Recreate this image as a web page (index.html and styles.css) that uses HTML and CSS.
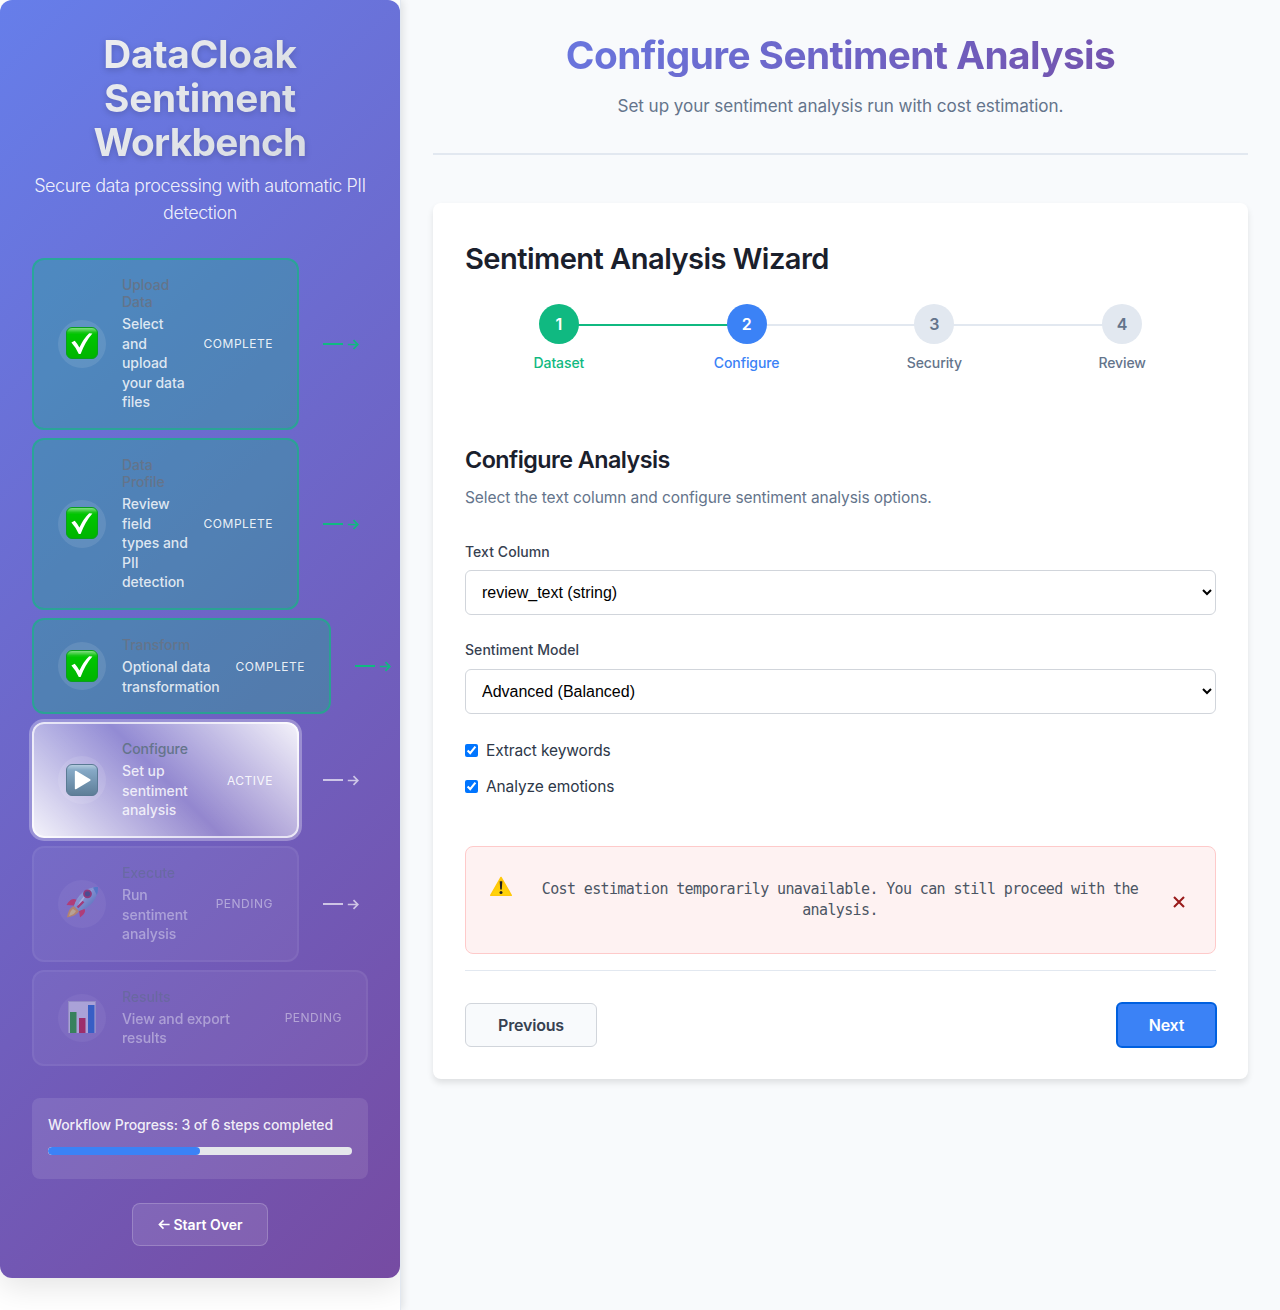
FILE: index.html
```html
<!DOCTYPE html>
<html lang="en">
<head>
<meta charset="utf-8">
<title>DataCloak Sentiment Workbench</title>
<link rel="stylesheet" href="styles.css">
</head>
<body>
<svg class="defs" aria-hidden="true">
  <defs>
    <linearGradient id="greenTile" x1="0" y1="0" x2="0" y2="1"><stop offset="0" stop-color="#8fe08f"/><stop offset=".16" stop-color="#18c618"/><stop offset=".22" stop-color="#00c600"/><stop offset="1" stop-color="#00b400"/></linearGradient>
    <linearGradient id="blueTile" x1="0" y1="0" x2="0" y2="1"><stop offset="0" stop-color="#b9d0e2"/><stop offset=".18" stop-color="#86a9c6"/><stop offset="1" stop-color="#5d7d97"/></linearGradient>
    <linearGradient id="hull" x1="0" y1="0" x2="1" y2="1"><stop offset="0" stop-color="#c5e4f8"/><stop offset=".5" stop-color="#8db9dc"/><stop offset="1" stop-color="#2469ad"/></linearGradient>
    <linearGradient id="warn" x1="0" y1="0" x2="0" y2="1"><stop offset="0" stop-color="#ffc107"/><stop offset="1" stop-color="#ffd60a"/></linearGradient>
    <symbol id="check" viewBox="0 0 32 32"><rect x=".5" y=".5" width="31" height="31" rx="5.5" fill="url(#greenTile)" stroke="#0a9f1d"/><path d="M5.400 15.600 8.700 13.800Q11.600 17 13.400 20.600 17.500 11.500 23.200 6.200L26.400 6.400Q19 14.800 14.600 27H12.800Q9.800 20.500 5.400 15.600Z" fill="#fff"/></symbol>
    <symbol id="arrow" viewBox="0 0 12 12"><path d="M.8 6.500H10.600M6.500 2.200 10.800 6.500 6.500 10.800" fill="none" stroke="currentColor" stroke-width="1.700"/></symbol>
  </defs>
</svg>
<div class="app">
  <aside class="sidebar">
    <div class="workflow">
      <header class="brand">
        <h1>DataCloak<br>Sentiment<br><span>Workbench</span></h1>
        <p>Secure data processing with automatic PII<br>detection</p>
      </header>
      <div class="steps">
        <div class="row">
          <div class="step done">
            <div class="icon"><svg width="32" height="32"><use href="#check"/></svg></div>
            <div class="info"><h3>Upload<br>Data</h3><p>Select<br>and<br>upload<br>your data<br>files</p></div>
            <span class="status">Complete</span>
          </div>
          <div class="link green"><i></i><svg width="12" height="12"><use href="#arrow"/></svg></div>
        </div>
        <div class="row">
          <div class="step done">
            <div class="icon"><svg width="32" height="32"><use href="#check"/></svg></div>
            <div class="info"><h3>Data<br>Profile</h3><p>Review<br>field<br>types and<br>PII<br>detection</p></div>
            <span class="status">Complete</span>
          </div>
          <div class="link green"><i></i><svg width="12" height="12"><use href="#arrow"/></svg></div>
        </div>
        <div class="row">
          <div class="step done wide">
            <div class="icon"><svg width="32" height="32"><use href="#check"/></svg></div>
            <div class="info"><h3>Transform</h3><p>Optional data<br>transformation</p></div>
            <span class="status">Complete</span>
          </div>
          <div class="link green"><i></i><svg width="12" height="12"><use href="#arrow"/></svg></div>
        </div>
        <div class="row">
          <div class="step active">
            <div class="icon"><svg width="32" height="32" viewBox="0 0 32 32"><rect x=".5" y=".5" width="31" height="31" rx="5.5" fill="url(#blueTile)" stroke="#5a7a94"/><path d="M9.600 7.500 23.800 16 9.600 24.500Z" fill="#fff" stroke="#fff" stroke-width="1.500" stroke-linejoin="round"/></svg></div>
            <div class="info"><h3>Configure</h3><p>Set up<br>sentiment<br>analysis</p></div>
            <span class="status">Active</span>
          </div>
          <div class="link"><i></i><svg width="12" height="12"><use href="#arrow"/></svg></div>
        </div>
        <div class="row">
          <div class="step pending">
            <div class="icon"><svg width="34" height="34" viewBox="0 0 34 34">
              <path d="M12 14C7 11 4 15 1.500 19L9 19.500ZM19 22C22 26 18 29 15 31.500L14 25Z" fill="#ef1c35"/>
              <path d="M9 20C4 22 3 27 2 31.500 7 30.500 12 29 14 25Z" fill="#f5a623"/><path d="M8 23C5 25 5 28 4 30 8 29 10 27 11 25Z" fill="#ffe36b"/>
              <path d="M9 20C12 9 21 1 33 1 33 13 25 22 14 25Z" fill="url(#hull)"/>
              <path d="M13 19C17 11 23 5 29 3 22 7 18 13 15.500 20Z" fill="#e4f1fb"/>
              <path d="M28 1.500C30 1 31 .9 33 1 33 4 33 6 31.800 9Z" fill="#3d8bd0"/>
              <path d="M12.500 21.500 18.500 15.500" stroke="#d31837" stroke-width="2.400"/>
              <circle cx="22.500" cy="7.800" r="4.400" fill="#b0143a"/><circle cx="22.500" cy="7.800" r="2.600" fill="#283a64"/></svg></div>
            <div class="info"><h3>Execute</h3><p>Run<br>sentiment<br>analysis</p></div>
            <span class="status">Pending</span>
          </div>
          <div class="link"><i></i><svg width="12" height="12"><use href="#arrow"/></svg></div>
        </div>
        <div class="row">
          <div class="step pending full">
            <div class="icon"><svg width="32" height="32" viewBox="0 0 32 32"><rect x="2" width="28" height="32" fill="#e4e6f4"/><path d="M2.500 0V32M29.500 0V32M2 .5H30" stroke="#b6bad0"/><path d="M4 11H10.500V32H4Z" fill="#00a500"/><path d="M13 17H19.500V32H13Z" fill="#c9001e"/><path d="M22 4H28.500V32H22Z" fill="#0060d0"/></svg></div>
            <div class="info"><h3>Results</h3><p>View and export<br>results</p></div>
            <span class="status">Pending</span>
          </div>
        </div>
      </div>
      <div class="progress"><span>Workflow Progress: 3 of 6 steps completed</span><div class="track"><div class="fill" style="width:50%"></div></div></div>
      <button class="restart"><svg width="12" height="12" viewBox="0 0 12 12"><path d="M11.600 6.500H1.400M5.500 2.400 1.400 6.500 5.500 10.600" fill="none" stroke="currentColor" stroke-width="1.600"/></svg><span>Start Over</span></button>
    </div>
  </aside>
  <main>
    <header class="page-head"><h1>Configure Sentiment Analysis</h1><p>Set up your sentiment analysis run with cost estimation.</p></header>
    <section class="wizard">
      <h2>Sentiment Analysis Wizard</h2>
      <div class="stepper">
        <div class="stage complete"><b>1</b><span>Dataset</span></div>
        <div class="stage current"><b>2</b><span>Configure</span></div>
        <div class="stage"><b>3</b><span>Security</span></div>
        <div class="stage"><b>4</b><span>Review</span></div>
      </div>
      <h3>Configure Analysis</h3>
      <p class="lead">Select the text column and configure sentiment analysis options.</p>
      <div class="field"><label for="col">Text Column</label><select id="col"><option>review_text (string)</option></select></div>
      <div class="field"><label for="model">Sentiment Model</label><select id="model"><option>Advanced (Balanced)</option></select></div>
      <div class="checks">
        <label><input type="checkbox" checked><span>Extract keywords</span></label>
        <label><input type="checkbox" checked><span>Analyze emotions</span></label>
      </div>
      <div class="alert">
        <svg class="warning" width="24" height="21" viewBox="0 0 24 21"><path d="M12 1.500 22.300 19.300H1.700Z" fill="url(#warn)" stroke="#ffc90a" stroke-width="1.500" stroke-linejoin="round"/><path d="M10.700 5.200H13.300L12.800 13.500H11.200Z" fill="#222"/><circle cx="12" cy="16.500" r="1.500" fill="#222"/></svg>
        <p>Cost estimation temporarily unavailable. You can still proceed with the<br>analysis.</p>
        <svg class="close" width="12" height="12" viewBox="0 0 12 12"><path d="M1 1 11 11M11 1 1 11" stroke="#991b1b" stroke-width="2.100"/></svg>
      </div>
      <footer class="actions"><button class="prev">Previous</button><button class="next">Next</button></footer>
    </section>
  </main>
</div>
</body>
</html>
```
FILE: styles.css
```css
* { box-sizing: border-box; }
body, h1, h2, h3, p { margin: 0; }
body { font-family: Inter, "Liberation Sans", sans-serif; background: #f8fafc; color: #1a202c; }
button { font-family: inherit; padding: 0; }
.defs { position: absolute; width: 0; height: 0; }
.app { display: flex; height: 1310px; overflow: hidden; }
.sidebar { flex: none; width: 401px; background: #fff; border-right: 1px solid #e2e8f0; box-shadow: 2px 0 8px rgba(0,0,0,.1); overflow: hidden; clip-path: inset(0 -20px 0 0); }
.workflow { height: 1278px; padding: 32px; border-radius: 12px; background: linear-gradient(135deg, #667eea 0%, #764ba2 100%); box-shadow: 0 10px 30px rgba(0,0,0,.1); display: flex; flex-direction: column; }
.brand { text-align: center; margin-bottom: 32px; }
.brand h1 { font-size: 38.8px; line-height: 44px; font-weight: 700; letter-spacing: -.25px; background: linear-gradient(135deg, #f0f1f3, #d4d8df); -webkit-background-clip: text; background-clip: text; color: transparent; filter: drop-shadow(0 2px 3px rgba(0,0,0,.18)); }
.brand h1 span { letter-spacing: -.75px; }
.brand p { margin-top: 8px; font-size: 18px; line-height: 27px; font-weight: 300; letter-spacing: -.45px; color: rgba(255,255,255,.9); white-space: nowrap; }
.steps { display: flex; flex-direction: column; gap: 8px; }
.row { display: flex; align-items: center; }
.step { flex: none; width: 267px; display: flex; align-items: center; gap: 16px; padding: 16px 24px; border: 2px solid rgba(255,255,255,.2); border-radius: 12px; background: rgba(255,255,255,.1); }
.step.wide { width: 299px; }
.step.full { width: 336px; }
.step.done { background: rgba(16,185,129,.3); border-color: rgba(16,185,129,.6); }
.step.active { background: linear-gradient(45deg, rgba(255,255,255,.93), rgba(255,255,255,.25) 50%, rgba(255,255,255,.93)) border-box; border-color: rgba(255,255,255,.7); box-shadow: 0 0 0 3px rgba(255,255,255,.3); }
.step.pending { opacity: .5; border-color: rgba(255,255,255,.11); }
.icon { flex: none; width: 48px; height: 48px; padding-bottom: 1px; border-radius: 50%; background: rgba(255,255,255,.1); display: flex; align-items: center; justify-content: center; }
.info { flex: 1; min-width: 0; white-space: nowrap; font-size: 14px; }
.info h3 { font-size: 14px; line-height: 17px; font-weight: 500; color: #64748b; margin-bottom: 4px; letter-spacing: -.08px; }
.info p { line-height: 19.6px; font-weight: 450; color: rgba(255,255,255,.82); letter-spacing: -.06px; }
.status { flex: none; font-size: 12px; text-transform: uppercase; letter-spacing: .5px; color: rgba(255,255,255,.9); }
.link { flex: none; display: flex; align-items: center; gap: 4px; margin-left: 24px; color: rgba(255,255,255,.65); }
.link i { width: 20px; height: 2px; background: currentColor; }
.link.green { color: #10b981; }
.progress { margin-top: 32px; height: 81px; padding: 16px; border-radius: 8px; background: rgba(255,255,255,.1); font-size: 14px; font-weight: 450; color: rgba(255,255,255,.9); }
.progress span { display: block; line-height: 22px; margin-bottom: 11px; white-space: nowrap; letter-spacing: -.1px; }
.track { height: 8px; border-radius: 4px; background: #e5e7eb; overflow: hidden; }
.fill { height: 100%; border-radius: 4px; background: #3b82f6; }
.restart { align-self: center; width: 136px; height: 43px; margin-top: 24px; display: flex; align-items: center; justify-content: center; gap: 4px; border: 1px solid rgba(255,255,255,.2); border-radius: 8px; background: rgba(255,255,255,.1); color: #fff; font-size: 14px; font-weight: 600; }

main { flex: 1; padding: 32px; min-width: 0; }
.page-head { height: 123px; text-align: center; border-bottom: 2px solid #e2e8f0; }
.page-head h1 { font-size: 38.8px; line-height: 45px; font-weight: 700; letter-spacing: -.6px; background: linear-gradient(135deg, #667eea, #764ba2); -webkit-background-clip: text; background-clip: text; color: transparent; }
.page-head p { margin-top: 15px; font-size: 17.1px; line-height: 28px; color: #64748b; letter-spacing: -.07px; }
.wizard { margin-top: 48px; height: 876px; padding: 32px; border-radius: 8px; background: #fff; box-shadow: 0 4px 6px rgba(0,0,0,.1); }
.wizard h2 { font-size: 29.1px; line-height: 48px; font-weight: 600; letter-spacing: -.55px; }
.stepper { display: grid; grid-template-columns: repeat(4, 1fr); margin-top: 21px; }
.stage { position: relative; display: flex; flex-direction: column; align-items: center; color: #64748b; font-size: 14px; font-weight: 500; line-height: 22px; letter-spacing: -.1px; }
.stage b { width: 40px; height: 40px; margin-bottom: 8px; border-radius: 50%; background: #e2e8f0; font-size: 16px; font-weight: 600; line-height: 40px; text-align: center; z-index: 1; }
.stage:not(:last-child)::after { content: ""; position: absolute; top: 20px; left: 50%; width: 100%; height: 2px; background: #e2e8f0; }
.stage.complete { color: #10b981; }
.stage.complete b { background: #10b981; color: #fff; }
.stage.complete::after { background: #10b981 !important; }
.stage.current { color: #3b82f6; }
.stage.current b { background: #3b82f6; color: #fff; }
.wizard h3 { margin-top: 67px; font-size: 23.3px; line-height: 38px; font-weight: 600; letter-spacing: -.53px; }
.lead { margin-top: 6px; font-size: 15.5px; line-height: 26px; color: #64748b; letter-spacing: -.09px; }
.field { display: flex; flex-direction: column; }
.field label { font-size: 14px; line-height: 22px; font-weight: 500; color: #374151; margin-bottom: 8px; letter-spacing: .06px; }
.field select { height: 45px; padding: 0 12px; border: 1px solid #d1d5db; border-radius: 6px; background: #fff; color: #000; font: 16px "Liberation Sans", sans-serif; }
.lead + .field { margin-top: 30px; }
.lead + .field label { margin-bottom: 7px; }
.field + .field { margin-top: 24px; }
.checks { margin-top: 23px; display: flex; flex-direction: column; gap: 10px; }
.checks label { display: flex; align-items: center; gap: 8px; height: 26px; font-size: 15.5px; line-height: 26px; color: #2d3748; letter-spacing: -.12px; }
.checks span { padding-top: 2px; }
.checks input { margin: 0; width: 13px; height: 13px; }
.alert { margin-top: 47px; height: 108px; display: flex; align-items: flex-start; padding: 29px 30px 0 23px; border: 1px solid #fecaca; border-radius: 8px; background: #fef2f2; }
.alert p { flex: 1; margin: 3px 6px 0 0; text-align: center; font: 15px/21px "DejaVu Sans Mono", monospace; letter-spacing: -.63px; color: #4b5563; white-space: nowrap; }
.close { margin-top: 20px; }
.actions { margin-top: 16px; border-top: 1px solid #e2e8f0; padding-top: 32px; display: flex; justify-content: space-between; }
.actions button { height: 44px; font-size: 16px; font-weight: 600; border-radius: 6px; letter-spacing: -.2px; }
.prev { width: 132px; background: #f8fafc; border: 1px solid #d1d5db; color: #374151; }
.next { width: 101px; height: 46px !important; margin: -1px -1px 0 0; background: #3b82f6; border: 2px solid #0060df; color: #fff; }
```
